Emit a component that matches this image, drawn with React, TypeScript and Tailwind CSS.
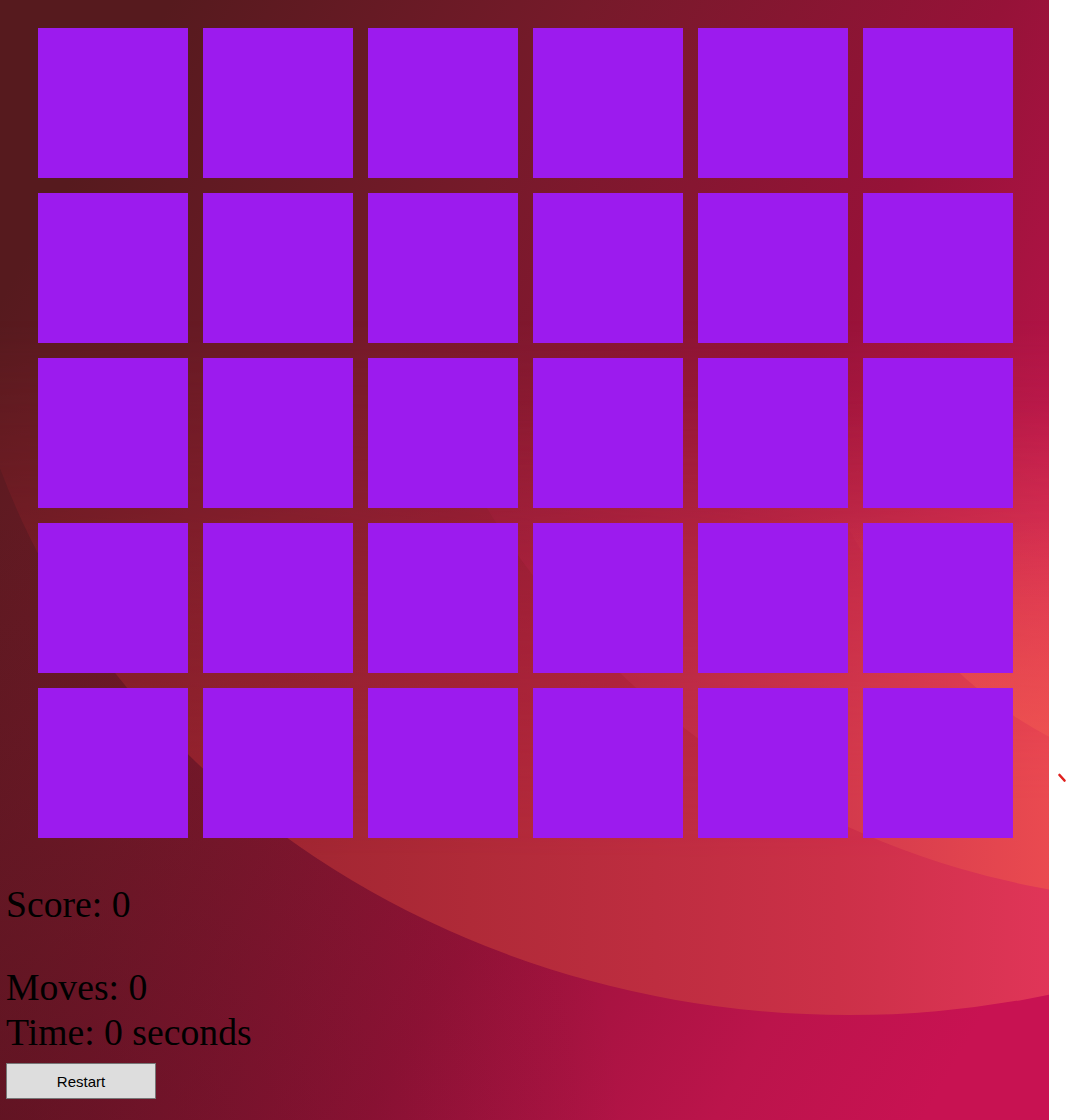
import React from 'react';

const tiles = Array.from({ length: 30 }, (_, i) => i);

function Wallpaper() {
  return (
    <svg
      className="absolute inset-0 h-full w-full"
      viewBox="0 0 1049 1120"
      preserveAspectRatio="none"
      aria-hidden="true"
    >
      <defs>
        <linearGradient id="base" gradientUnits="userSpaceOnUse" x1="0" y1="300" x2="1049" y2="900">
          <stop offset="0" stopColor="#561a1e" />
          <stop offset="0.3" stopColor="#761a2a" />
          <stop offset="0.6" stopColor="#961238" />
          <stop offset="0.85" stopColor="#bb144b" />
          <stop offset="1" stopColor="#c81252" />
        </linearGradient>
        <radialGradient id="shade" gradientUnits="userSpaceOnUse" cx="0" cy="1120" r="620">
          <stop offset="0" stopColor="#3e0c16" stopOpacity="0.4" />
          <stop offset="1" stopColor="#3e0c16" stopOpacity="0" />
        </radialGradient>
        <linearGradient id="archA" gradientUnits="userSpaceOnUse" x1="0" y1="0" x2="1049" y2="0">
          <stop offset="0" stopColor="#8a2028" />
          <stop offset="0.45" stopColor="#b02a38" />
          <stop offset="0.8" stopColor="#cc3048" />
          <stop offset="1" stopColor="#e03558" />
        </linearGradient>
        <linearGradient id="fadeA" gradientUnits="userSpaceOnUse" x1="0" y1="320" x2="0" y2="860">
          <stop offset="0" stopColor="#fff" stopOpacity="0" />
          <stop offset="1" stopColor="#fff" stopOpacity="1" />
        </linearGradient>
        <mask id="maskA" maskUnits="userSpaceOnUse" x="0" y="0" width="1049" height="1120">
          <rect width="1049" height="1120" fill="url(#fadeA)" />
        </mask>
        <linearGradient id="archB" gradientUnits="userSpaceOnUse" x1="450" y1="0" x2="1049" y2="0">
          <stop offset="0" stopColor="#a81e40" />
          <stop offset="0.5" stopColor="#c8324a" />
          <stop offset="1" stopColor="#ea4a50" />
        </linearGradient>
        <linearGradient id="fadeB" gradientUnits="userSpaceOnUse" x1="0" y1="400" x2="0" y2="800">
          <stop offset="0" stopColor="#fff" stopOpacity="0" />
          <stop offset="1" stopColor="#fff" stopOpacity="1" />
        </linearGradient>
        <mask id="maskB" maskUnits="userSpaceOnUse" x="0" y="0" width="1049" height="1120">
          <rect width="1049" height="1120" fill="url(#fadeB)" />
        </mask>
        <linearGradient id="archC" gradientUnits="userSpaceOnUse" x1="0" y1="520" x2="0" y2="820">
          <stop offset="0" stopColor="#f05450" stopOpacity="0" />
          <stop offset="1" stopColor="#f05850" stopOpacity="0.85" />
        </linearGradient>
      </defs>
      <rect width="1049" height="1120" fill="url(#base)" />
      <rect width="1049" height="1120" fill="url(#shade)" />
      <ellipse cx="849" cy="215" rx="895" ry="800" fill="url(#archA)" mask="url(#maskA)" />
      <ellipse cx="1200" cy="100" rx="828" ry="803" fill="url(#archB)" mask="url(#maskB)" />
      <ellipse cx="1200" cy="100" rx="455" ry="675" fill="url(#archC)" />
    </svg>
  );
}

export default function App() {
  return (
    <div className="relative min-h-[1120px] w-[1049px]">
      <Wallpaper />
      <div className="relative pt-[28px]">
        <div className="ml-[38px] grid w-fit grid-cols-[repeat(6,150px)] gap-[15px]">
          {tiles.map((t) => (
            <div key={t} className="h-[150px] w-[150px] bg-[#9c1bee]" />
          ))}
        </div>
        <div className="mt-[44px] pl-[6px] font-['Liberation_Serif',serif] text-[37.7px] leading-[45px] text-black">
          <p>Score: 0</p>
          <p className="mt-[38px]">Moves: 0</p>
          <p>Time: 0 seconds</p>
          <button
            type="button"
            className="mt-[8px] block h-[36px] w-[150px] border border-[#767676] bg-[#dddddd] font-['Liberation_Sans',Arial,sans-serif] text-[15px] leading-none text-black"
          >
            Restart
          </button>
        </div>
      </div>
      <svg className="absolute left-[1049px] top-[770px] h-[16px] w-[18px]" viewBox="0 0 18 16" aria-hidden="true">
        <path d="M10.5 5 L15.5 10.5" stroke="#e0201e" strokeWidth="2.6" strokeLinecap="round" />
      </svg>
    </div>
  );
}
